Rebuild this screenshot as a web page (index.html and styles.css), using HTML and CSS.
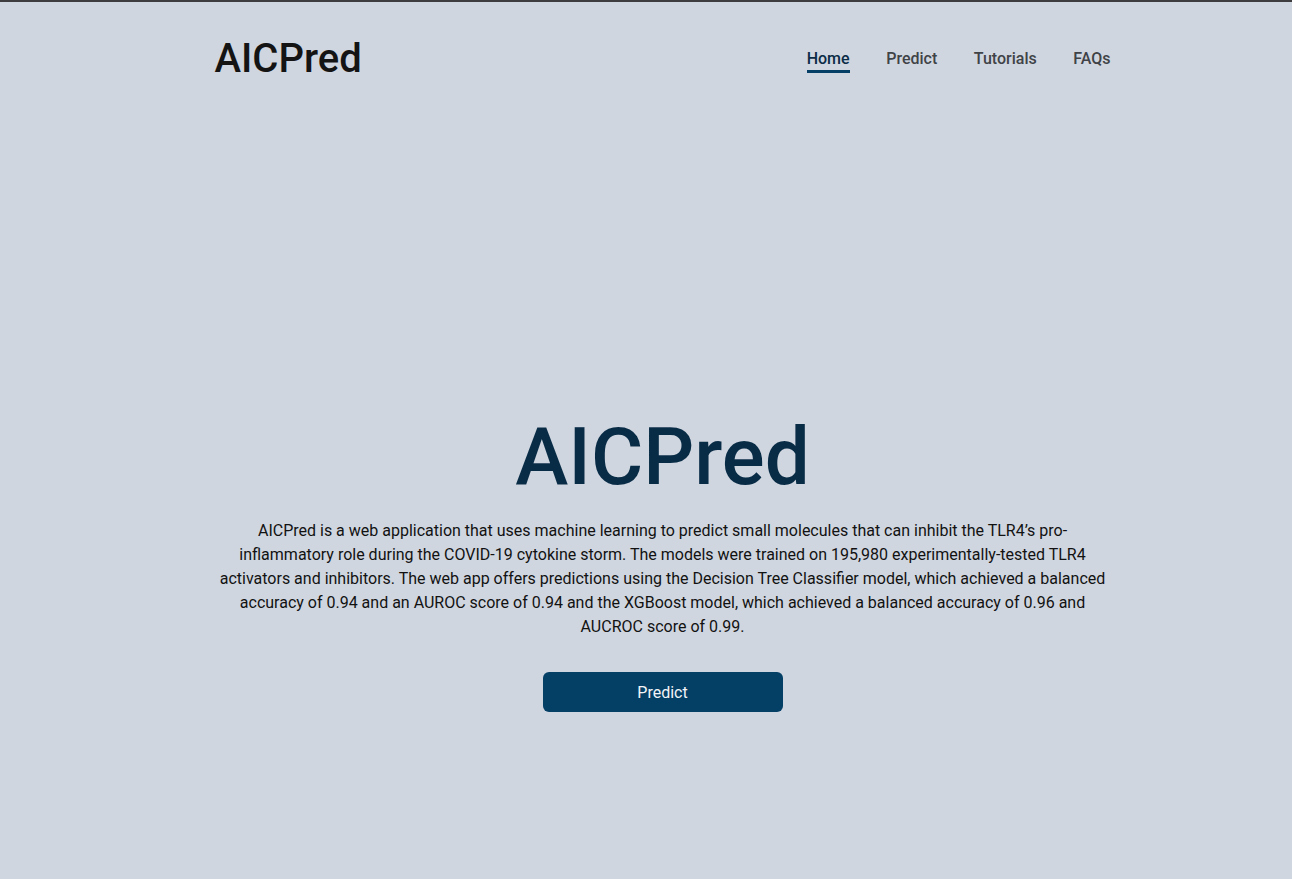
FILE: index.html
```html
<!DOCTYPE html>
<html lang="en">
<head>
<meta charset="utf-8">
<title>AICPred</title>
<link rel="stylesheet" href="styles.css">
</head>
<body>
<div class="page">
  <header class="header">
    <div class="logo">AICPred</div>
    <nav class="nav">
      <a class="nav-link active" href="#">Home</a>
      <a class="nav-link" href="#">Predict</a>
      <a class="nav-link" href="#">Tutorials</a>
      <a class="nav-link" href="#">FAQs</a>
    </nav>
  </header>
  <main class="hero">
    <h1 class="hero-title">AICPred</h1>
    <p class="hero-text">AICPred is a web application that uses machine learning to predict small molecules that can inhibit the TLR4’s pro-inflammatory role during the COVID-19 cytokine storm. The models were trained on 195,980 experimentally-tested TLR4 activators and inhibitors. The web app offers predictions using the Decision Tree Classifier model, which achieved a balanced accuracy of 0.94 and an AUROC score of 0.94 and the XGBoost model, which achieved a balanced accuracy of 0.96 and AUCROC score of 0.99.</p>
    <button class="btn">Predict</button>
  </main>
</div>
</body>
</html>
```
FILE: styles.css
```css
html, body {
  margin: 0;
  padding: 0;
}
body {
  background: #d0d6e0;
  border-top: 2px solid #3d3d3f;
  font-family: Roboto, "Liberation Sans", sans-serif;
  min-height: 877px;
  padding-left: 33px;
  box-sizing: border-box;
}
.page {
  max-width: 896px;
  margin: 0 auto;
}
.header {
  display: flex;
  align-items: center;
  justify-content: space-between;
  height: 112px;
}
.logo {
  font-size: 40px;
  font-weight: 500;
  color: #141414;
}
.nav {
  display: flex;
  gap: 36.6px;
}
.nav-link {
  font-size: 16px;
  font-weight: 500;
  color: #3f4347;
  text-decoration: none;
  padding-bottom: 2px;
  border-bottom: 3px solid transparent;
  margin-top: 5px;
}
.nav-link.active {
  color: #0b2c46;
  border-bottom-color: #053f66;
}
.hero {
  display: flex;
  flex-direction: column;
  align-items: center;
  padding-top: 295px;
}
.hero-title {
  margin: 0;
  font-size: 80px;
  font-weight: 500;
  line-height: 1.2;
  color: #092c46;
}
.hero-text {
  margin: 14px 0 0;
  font-size: 16px;
  line-height: 24px;
  color: #121212;
  text-align: center;
}
.btn {
  margin-top: 33px;
  width: 240px;
  height: 40px;
  border: none;
  border-radius: 6px;
  background: #043f66;
  color: #f2f4f7;
  font-family: Roboto, "Liberation Sans", sans-serif;
  font-size: 16px;
}
```
